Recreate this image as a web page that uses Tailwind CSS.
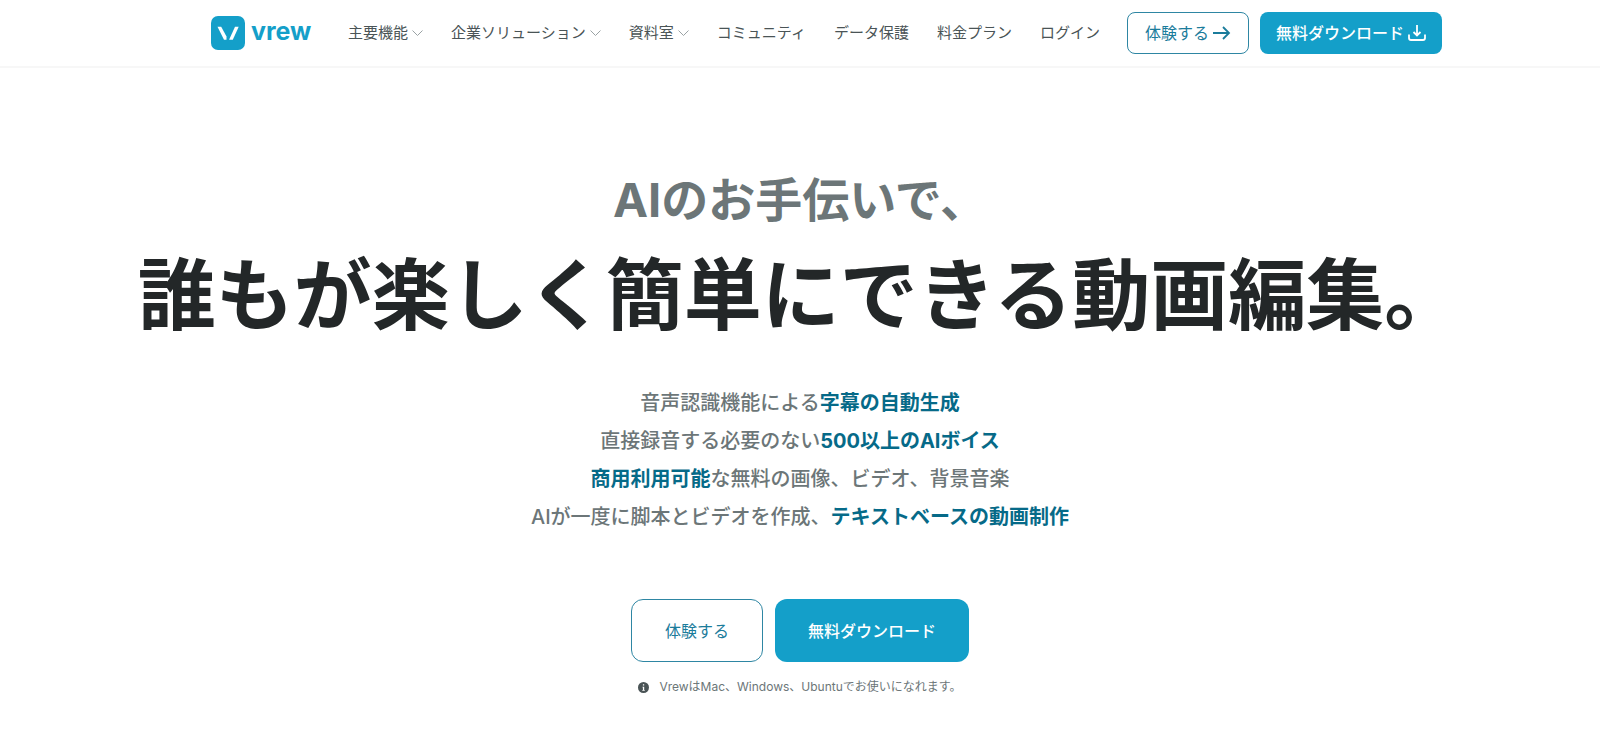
<!DOCTYPE html>
<html lang="ja">
 <head>
  <meta charset="utf-8"/>
  <meta content="width=device-width, initial-scale=1.0" name="viewport"/>
  <title>
   Vrew
  </title>
  <script src="https://cdn.jsdelivr.net/npm/@tailwindcss/browser@4"></script>
 </head>
 <body class="bg-white font-['Inter','Noto_Sans_CJK_JP',sans-serif] text-[#6c7678]">
  <!-- ヘッダー -->
  <header class="border-b-2 border-[#f7f7f7]">
   <div class="mx-auto flex h-[66px] max-w-[1284px] items-center pl-[53px]">
    <a aria-label="vrew" class="flex items-center gap-[6px] text-[#149fc9]" href="#">
     <svg class="size-[34px]" viewBox="0 0 34 34">
      <rect fill="#149fc9" height="34" rx="7" width="34"/>
      <path d="M6.500 10.800h3.700l5.300 9.700v3.300h-2.500z" fill="#fff"/>
      <path d="M24 10.800h3.700l-5.900 13h-3.700z" fill="#fff"/>
     </svg>
     <span class="pb-1 text-[25px] leading-[30px] font-bold">vrew</span>
    </a>
    <nav class="ml-auto flex items-center gap-7 text-[15px] leading-6 text-[#4a5456]">
     <button class="flex items-center gap-1">
      主要機能
      <svg class="h-[6px] w-[11px]" fill="none" stroke="#9aa2a4" viewBox="0 0 11 6"><path d="M.5.5l5 5 5-5"/></svg>
     </button>
     <button class="flex items-center gap-1">
      企業ソリューション
      <svg class="h-[6px] w-[11px]" fill="none" stroke="#9aa2a4" viewBox="0 0 11 6"><path d="M.5.5l5 5 5-5"/></svg>
     </button>
     <button class="flex items-center gap-1">
      資料室
      <svg class="h-[6px] w-[11px]" fill="none" stroke="#9aa2a4" viewBox="0 0 11 6"><path d="M.5.5l5 5 5-5"/></svg>
     </button>
     <a href="#">コミュニティ</a>
     <a href="#">データ保護</a>
     <a href="#">料金プラン</a>
     <a href="#">ログイン</a>
    </nav>
    <div class="ml-[27px] flex gap-[11px] text-base">
     <button class="flex h-[42px] items-center gap-1 rounded-lg border border-[#2e86a3] px-[17px] text-[#1b7c9b]">
      体験する
      <svg class="size-[18px]" fill="none" stroke="currentColor" stroke-width="1.800" viewBox="0 0 18 18"><path d="M0 9h15.500M10 3l6 6-6 6"/></svg>
     </button>
     <button class="flex h-[42px] items-center gap-1 rounded-lg bg-[#149fc9] px-4 font-medium text-white">
      無料ダウンロード
      <svg class="size-[18px]" fill="none" stroke="currentColor" stroke-width="1.800" viewBox="0 0 18 18"><path d="M9 1v10.500M5.500 8L9 11.500 12.500 8M1 10.500V14q0 2 2 2h12q2 0 2-2v-3.500"/></svg>
     </button>
    </div>
   </div>
  </header>
  <!-- メイン -->
  <main class="flex flex-col items-center pt-[102px] text-center">
   <h1 class="font-bold">
    <span class="block text-[47px] leading-[60px]">AIのお手伝いで、</span>
    <span class="mt-4 block text-[78px] leading-[100px] text-[#232728]">誰もが楽しく簡単にできる動画編集。</span>
   </h1>
   <p class="mt-[38px] text-xl leading-[38px] font-medium">
    音声認識機能による<b class="font-bold text-[#066a88]">字幕の自動生成</b><br/>
    直接録音する必要のない<b class="font-bold text-[#066a88]">500以上のAIボイス</b><br/>
    <b class="font-bold text-[#066a88]">商用利用可能</b>な無料の画像、ビデオ、背景音楽<br/>
    AIが一度に脚本とビデオを作成、<b class="font-bold text-[#066a88]">テキストベースの動画制作</b>
   </p>
   <div class="mt-[63px] flex gap-3 text-base">
    <button class="h-[63px] rounded-xl border border-[#2e86a3] px-[33px] text-[#1b7c9b]">体験する</button>
    <button class="h-[63px] rounded-xl bg-[#149fc9] px-[33px] font-medium text-white">無料ダウンロード</button>
   </div>
   <p class="mt-[15px] flex items-center gap-[10px] text-xs leading-5">
    <svg class="size-[11px]" viewBox="0 0 11 11">
     <circle cx="5.500" cy="5.500" fill="#4a5456" r="5.500"/>
     <path d="M4.900 2.300h1.300v1.300H4.900zM4.500 4.700h1.700v3.300h.6v.7H4.300V8h.6V5.400h-.4z" fill="#fff"/>
    </svg>
    VrewはMac、Windows、Ubuntuでお使いになれます。
   </p>
  </main>
 </body>
</html>
